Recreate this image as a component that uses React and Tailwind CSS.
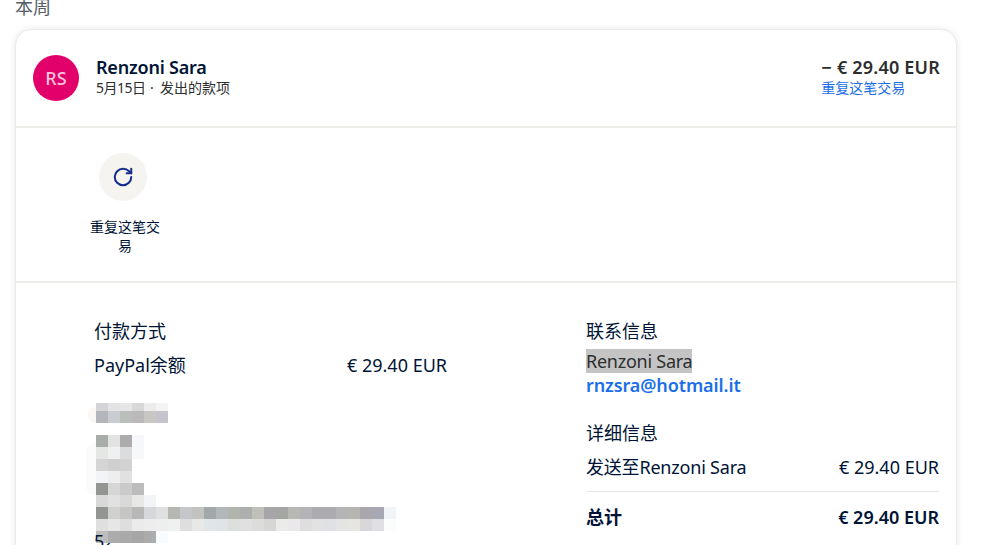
import { RotateCw } from "lucide-react"

const mosaic = [
  { h: "h-[8px]", cells: ["bg-[#d3d3d8]", "bg-[#e3e3e3]", "bg-[#e6e6e6]", "bg-[#d8d8d8]", "bg-[#ececec]", "bg-[#f4f4f4]"] },
  { h: "h-[12px] mb-[12px]", cells: ["bg-[#b4b6bb]", "bg-[#c9ccd1]", "bg-[#bcbebc]", "bg-[#bbb9ba]", "bg-[#c8c7c3]", "bg-[#c5c4cc]"] },
  { h: "h-[12px]", cells: ["bg-[#a9adaa]", "bg-[#e3e3e3]", "bg-[#adabab]", "bg-[#f6f7fa]"] },
  { h: "h-[12px]", cells: ["bg-[#e4e7e4]", "bg-[#eff1f0]", "bg-[#dcdcde]", "bg-[#f7f8fa]"] },
  { h: "h-[12px]", cells: ["bg-[#d4d4d4]", "bg-[#cfcfcf]", "bg-[#d2d2d2]"] },
  { h: "h-[12px]", cells: ["bg-[#f2f4f7]", "bg-[#eeeeee]", "bg-[#e1e1e1]"] },
  { h: "h-[12px]", cells: ["bg-[#939592]", "bg-[#d6d6d6]", "bg-[#cacaca]", "bg-[#bcbcbc]"] },
  { h: "h-[12px]", cells: ["bg-[#d9d9d9]", "bg-[#e2e1e1]", "bg-[#d9d9d9]", "bg-[#e8e8e6]", "bg-[#f2f4f7]"] },
  {
    h: "h-[12px]",
    cells: [
      "bg-[#939592]", "bg-[#d0d0ce]", "bg-[#c6c6c4]", "bg-[#b8b8b8]", "bg-[#d6d7da]", "bg-[#e0e0e0]",
      "bg-[#b4b7b2]", "bg-[#c6c7cb]", "bg-[#c2c3be]", "bg-[#a0a8aa]", "bg-[#b2b7b9]", "bg-[#b2b4ae]",
      "bg-[#adaeae]", "bg-[#bfc0ba]", "bg-[#a7a5a7]", "bg-[#a4a6a4]", "bg-[#b8b9b4]", "bg-[#b4b4b6]",
      "bg-[#acacb0]", "bg-[#acacb0]", "bg-[#b4b4b6]", "bg-[#b6b5b1]", "bg-[#aaa7ac]", "bg-[#a8a7b4]",
      "bg-[#f2f5f7]",
    ],
  },
  {
    h: "h-[12px]",
    cells: [
      "bg-[#dfdfdf]", "bg-[#e6e6e6]", "bg-[#dedede]", "bg-[#ebebeb]", "bg-[#ecedec]", "bg-[#eeeeee]",
      "bg-[#eff1f0]", "bg-[#dededf]", "bg-[#e8e8e6]", "bg-[#e0e5e9]", "bg-[#e0e4e6]", "bg-[#dcdfdb]",
      "bg-[#e0e0e0]", "bg-[#dcdcdb]", "bg-[#d6d6d6]", "bg-[#ebecea]", "bg-[#eae8ea]", "bg-[#dedede]",
      "bg-[#e2e2e2]", "bg-[#e0e1e4]", "bg-[#e4e4e4]", "bg-[#e6e5e2]", "bg-[#d8d8da]", "bg-[#e0e0e4]",
      "bg-[#fbfcfc]",
    ],
  },
  { h: "h-[12px] relative", cells: ["bg-[#bdbdbd]", "bg-[#acacac]", "bg-[#aaaaaa]", "bg-[#a6a6a6]", "bg-[#acacac]", "bg-[#f8fbff]"] },
]

const cjk = "font-['Noto_Sans','Noto_Sans_CJK_SC',sans-serif]"

function Mosaic() {
  return (
    <div className="relative mt-[26px] ml-[2px]">
      {/* pale smudges left of the redaction */}
      <div className="absolute left-[-8px] top-[4px] h-[16px] w-[8px] rounded-l-full bg-[#fdf7f3]" />
      <div className="absolute left-[-10px] top-[40px] h-[52px] w-[10px] rounded-l-[8px] bg-[#fbfbfb]" />
      <span className="absolute left-[8px] top-[126px] text-[18px] leading-[24px] text-[#001435]">2</span>
      {mosaic.map((row, i) => (
        <div key={i} className={`flex ${row.h}`}>
          {row.cells.map((c, j) => (
            <div key={j} className={`h-[12px] w-[12px] ${c}`} />
          ))}
        </div>
      ))}
      <span className="absolute left-[-2px] top-[126px] text-[18px] leading-[24px] text-[#001435]">5</span>
    </div>
  )
}

export default function App() {
  return (
    <div className={`h-[545px] w-[1007px] overflow-hidden bg-white text-[#001435] ${cjk}`}>
      <div className="h-[29px] pl-[15px] text-[18px] leading-[14px] text-[#545d68]">本周</div>

      <div className="ml-[15px] h-[600px] w-[942px] rounded-t-[16px] border border-[#ecebe8] bg-white shadow-[0_0_6px_rgba(0,0,0,0.1)]">
        <div className="flex h-[96px] justify-between pl-[17px] pr-[16px] pt-[25px]">
          <div className="flex">
            <div className="flex h-[46px] w-[46px] items-center justify-center rounded-full bg-[#e2006a] text-[18px] font-medium text-[#fbc4dc]">
              RS
            </div>
            <div className="ml-[17px] pt-[2px]">
              <div className="text-[18px] font-semibold leading-[20px] tracking-[-0.2px] text-[#001435]">Renzoni Sara</div>
              <div className="mt-[1px] flex whitespace-nowrap text-[14px] leading-[20px] text-[#2c2e2f]">
                <span className="w-[48px] tracking-[-0.5px]">5月15日</span>
                <span className="w-[16px] text-center">·</span>
                <span>发出的款项</span>
              </div>
            </div>
          </div>
          <div className="pt-[2px]">
            <div className="text-[18px] font-semibold leading-[20px] tracking-[0.2px] text-[#2c2e2f]">
              <span className="mr-[5px]">−</span>€ 29.40 EUR
            </div>
            <div className="mt-[1px] text-[14px] leading-[20px] text-[#1a6fe8]">重复这笔交易</div>
          </div>
        </div>

        <div className="h-[2px] bg-[#eeedea]" />

        <div className="h-[153px] pl-[67px] pt-[25px]">
          <div className="flex w-[84px] flex-col">
            <div className="ml-[16px] flex h-[48px] w-[48px] items-center justify-center rounded-full bg-[#f5f4f0]">
              <RotateCw size={22} strokeWidth={2.2} className="text-[#142c8e]" />
            </div>
            <div className="mt-[16px] w-[84px] px-[6px] text-center text-[14px] leading-[19px] text-[#001435]">重复这笔交易</div>
          </div>
        </div>

        <div className="h-[2px] bg-[#eeedea]" />

        <div className="grid grid-cols-[353px_353px] gap-x-[139px] pl-[78px] pt-[35px]">
          <div>
            <div className="text-[18px] leading-[26px]">付款方式</div>
            <div className="mt-[9px] flex justify-between text-[18px] leading-[24px]">
              <span>PayPal余额</span>
              <span>€ 29.40 EUR</span>
            </div>
            <Mosaic />
          </div>

          <div>
            <div className="text-[18px] leading-[26px]">联系信息</div>
            <div className="mt-[5px] text-[18px] leading-[24px] tracking-[-0.25px] text-[#2c2e2f]">
              <span className="bg-[#c4c4c4]">Renzoni Sara</span>
            </div>
            <div className="text-[18px] font-semibold leading-[24px] tracking-[-0.1px] text-[#1a6fe8]">rnzsra@hotmail.it</div>
            <div className="mt-[23px] text-[18px] leading-[26px]">详细信息</div>
            <div className="mt-[9px] flex justify-between text-[18px] leading-[24px]">
              <span className="tracking-[-0.2px]">发送至Renzoni Sara</span>
              <span>€ 29.40 EUR</span>
            </div>
            <div className="mt-[12px] h-px bg-[#e8e8e6]" />
            <div className="mt-[13px] flex justify-between text-[18px] font-semibold leading-[24px]">
              <span className="font-bold">总计</span>
              <span>€ 29.40 EUR</span>
            </div>
          </div>
        </div>
      </div>
    </div>
  )
}
